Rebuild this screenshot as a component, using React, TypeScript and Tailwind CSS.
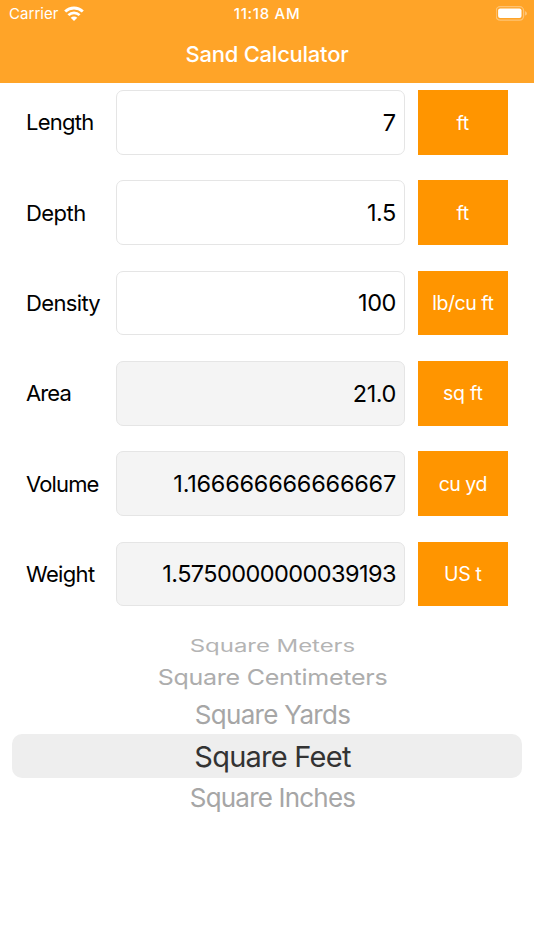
const rows = [
    { label: 'Length', value: '7', unit: 'ft', labelClass: 'tracking-[-0.75px]', valueClass: '', unitClass: 'tracking-[-0.2px]', readOnly: false },
    { label: 'Depth', value: '1.5', unit: 'ft', labelClass: 'tracking-[-0.55px]', valueClass: 'tracking-[-0.4px]', unitClass: 'tracking-[-0.2px]', readOnly: false },
    { label: 'Density', value: '100', unit: 'lb/cu ft', labelClass: 'tracking-[-0.65px]', valueClass: 'tracking-[-0.4px]', unitClass: 'tracking-[-0.45px]', readOnly: false },
    { label: 'Area', value: '21.0', unit: 'sq ft', labelClass: 'tracking-[-0.9px]', valueClass: 'tracking-[-0.4px]', unitClass: 'tracking-[-0.2px]', readOnly: true },
    { label: 'Volume', value: '1.166666666666667', unit: 'cu yd', labelClass: 'tracking-[-0.85px]', valueClass: 'tracking-[-0.23px]', unitClass: 'tracking-[-0.5px]', readOnly: true },
    { label: 'Weight', value: '1.5750000000039193', unit: 'US t', labelClass: 'tracking-[-0.65px]', valueClass: 'tracking-[-0.57px]', unitClass: 'tracking-[-0.4px]', readOnly: true },
];

const options = [
    { name: 'Square Meters', box: 'h-[25px] text-[#b4b4b4]', text: 'text-[24px] tracking-[-0.05px] scale-y-[0.71]' },
    { name: 'Square Centimeters', box: 'h-[37px] text-[#adadad]', text: 'text-[25px] tracking-[-0.25px] scale-y-[0.88]' },
    { name: 'Square Yards', box: 'h-[39px] pb-[2px] text-[#a6a6a6]', text: 'text-[26px] tracking-[-0.7px]' },
    { name: 'Square Feet', box: 'h-[43.5px] rounded-[10px] bg-[#eeeeee] text-[#333333]', text: 'text-[29px] tracking-[-0.75px]' },
    { name: 'Square Inches', box: 'h-[40px] pb-[2px] text-[#a6a6a6]', text: 'text-[26px] tracking-[-0.8px]' },
];

function WifiIcon() {
    return (
        <svg className="-mt-[2px] h-[15px] w-5" viewBox="0 0 20 15" fill="none" stroke="white">
            <path d="M1.2 5.5C6.2.8 13.8.8 18.8 5.5" strokeWidth="2.9" />
            <path d="M4.4 9.1c3.2-3.1 8-3.1 11.2 0" strokeWidth="2.7" />
            <path d="M10 15 6.7 11.8c1.8-1.7 4.8-1.7 6.6 0Z" fill="white" stroke="none" />
        </svg>
    );
}

function BatteryIcon() {
    return (
        <svg className="h-[15px] w-8" viewBox="0 0 32 15" fill="none">
            <rect x=".2" y=".7" width="27.4" height="13.4" rx="4" stroke="white" strokeOpacity=".35" strokeWidth="1.3" />
            <rect x="2.1" y="2.6" width="23.4" height="9.4" rx="2" fill="white" />
            <path d="M29.2 5.2c2.1.7 2.1 3.7 0 4.4Z" fill="white" fillOpacity=".45" />
        </svg>
    );
}

function Row({ row }: { row: any }) {
    return (
        <div className="flex h-[64.5px] items-stretch">
            <label className={`flex w-[90px] shrink-0 items-center pt-px text-[22px] ${row.labelClass}`}>{row.label}</label>
            <div className={`flex w-[289px] shrink-0 items-center justify-end rounded-[7px] border border-[#e5e5e5] pr-2 text-[23.5px] ${row.readOnly ? 'bg-[#f4f4f4]' : 'bg-white'} ${row.valueClass}`}>
                {row.value}
            </div>
            <button className={`ml-[12.5px] w-[90.5px] shrink-0 bg-[#ff9500] pt-[1.5px] text-[19.5px] whitespace-nowrap text-white ${row.unitClass}`}>{row.unit}</button>
        </div>
    );
}

export default function App() {
    return (
        <div className="h-[950px] w-[534px] overflow-hidden bg-white font-['Inter',sans-serif] text-black">
            <header className="h-[82.6px] bg-[#ffa428] text-white">
                <div className="grid h-[27px] grid-cols-[1fr_auto_1fr] items-center pl-[9px] pr-[6px] text-[15px]">
                    <div className="flex items-center gap-[5px] pt-px">
                        <span className="tracking-[0.05px]">Carrier</span>
                        <WifiIcon />
                    </div>
                    <span className="-ml-[3px] pt-px text-center font-medium tracking-[0.7px]">11:18 AM</span>
                    <div className="flex justify-end"><BatteryIcon /></div>
                </div>
                <h1 className="flex h-[55px] items-center justify-center text-[22px] font-[550] tracking-[-0.25px]">Sand Calculator</h1>
            </header>
            <main>
                <div className="flex flex-col gap-[25.8px] pt-[7.6px] pl-[26px]">
                    {rows.map((row) => <Row key={row.label} row={row} />)}
                </div>
                <div className="mx-3 mt-[27.2px] flex flex-col">
                    {options.map((option) => (
                        <div key={option.name} className={`flex items-center justify-center pt-px pl-[11px] whitespace-nowrap ${option.box}`}>
                            <span className={option.text + ' inline-block'}>{option.name}</span>
                        </div>
                    ))}
                </div>
            </main>
        </div>
    );
}
